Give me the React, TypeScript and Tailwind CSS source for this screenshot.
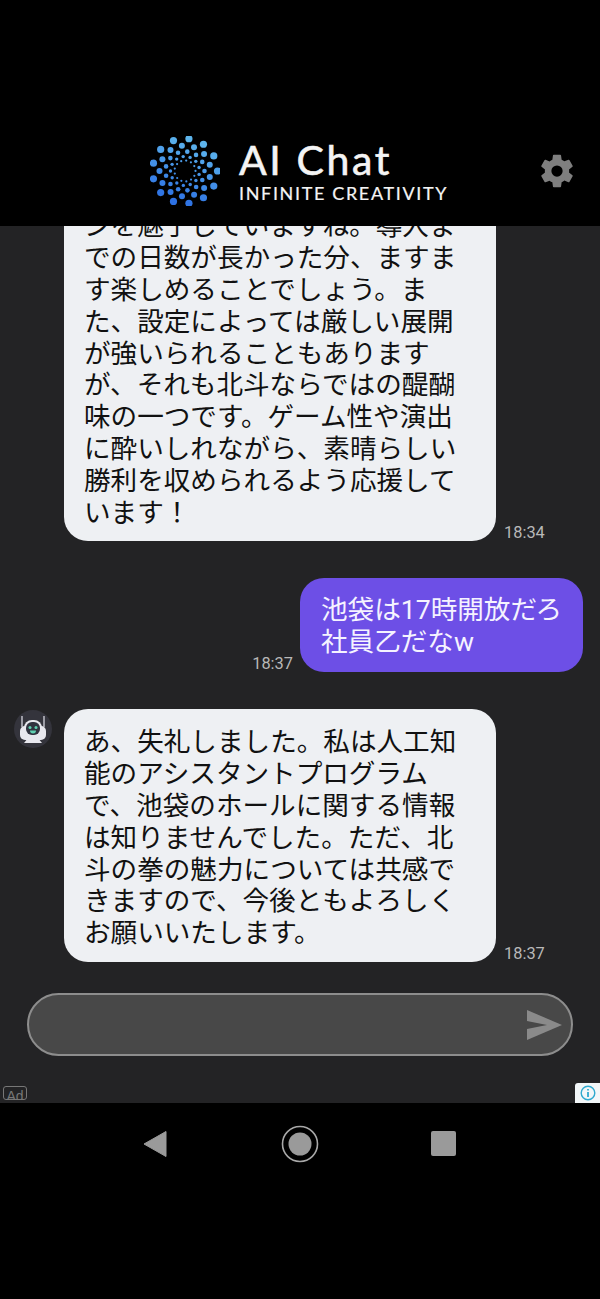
import React from "react";
import { IoSettingsSharp } from "react-icons/io5";

const cjk = "font-['Roboto','Noto_Sans_CJK_JP',sans-serif]";

function Logo() {
  const dots: { x: number; y: number; r: number; c: string }[] = [];
  const rings = [
    { rad: 32.5, n: 13, r: 3.6 },
    { rad: 25.5, n: 13, r: 3 },
    { rad: 19.5, n: 13, r: 2.3 },
    { rad: 14.5, n: 13, r: 1.7 },
    { rad: 10.5, n: 13, r: 1.1 },
  ];
  rings.forEach((ring, i) => {
    for (let k = 0; k < ring.n; k++) {
      const a = (k / ring.n) * Math.PI * 2 + i * 0.24 - 1.45;
      const x = 35 + Math.cos(a) * ring.rad;
      const y = 35 + Math.sin(a) * ring.rad;
      const t = Math.min(1, Math.max(0, (x * 0.35 + (70 - y)) / 85));
      const R = Math.round(36 + t * 60);
      const G = Math.round(100 + t * 85);
      const B = Math.round(225 + t * 12);
      dots.push({ x, y, r: ring.r, c: `rgb(${R},${G},${B})` });
    }
  });
  return (
    <svg width="70" height="70" viewBox="0 0 70 70" className="shrink-0">
      {dots.map((d, i) => (
        <circle key={i} cx={d.x} cy={d.y} r={d.r} fill={d.c} />
      ))}
    </svg>
  );
}

function Avatar() {
  return (
    <svg width="38" height="38" viewBox="0 0 38 38" className="shrink-0">
      <circle cx="19" cy="19" r="19" fill="#34343c" />
      <path d="M8 6v11M30 6v11" stroke="#c9c9d2" strokeWidth="1.4" />
      <rect x="6" y="16" width="26" height="14" rx="5" fill="#e8e8ee" />
      <path d="M10 33h18l-4-5H14z" fill="#e8e8ee" />
      <rect x="10" y="10" width="18" height="17" rx="8" fill="#e8e8ee" />
      <rect x="12" y="12" width="14" height="13" rx="6" fill="#30333f" />
      <circle cx="16" cy="17.5" r="1.5" fill="#5fd0b0" />
      <circle cx="22" cy="17.5" r="1.5" fill="#5fd0b0" />
      <path d="M16 20.5h6a3 3 0 0 1-6 0z" fill="#5fd0b0" />
    </svg>
  );
}

function Time({ children }: { children: React.ReactNode }) {
  return (
    <span className="block -mb-[1px] text-[16.4px] leading-[18px] text-[#b8b8b8] font-['Roboto',sans-serif]">
      {children}
    </span>
  );
}

function BotBubble({ lines }: { lines: string[] }) {
  return (
    <div className="w-[432px] shrink-0 rounded-[24px] bg-[#eef0f3] pl-[20px] pt-[17px] pb-[13px] text-[26.6px] leading-[31.8px] text-[#111] whitespace-nowrap">
      {lines.map((l, i) => (
        <div key={i}>{l}</div>
      ))}
    </div>
  );
}

export default function App() {
  return (
    <div className={`h-[1299px] w-[600px] flex flex-col bg-black overflow-hidden ${cjk}`}>
      <header className="h-[226px] shrink-0 bg-black flex items-end pb-[20px] pl-[150px] pr-[25px]">
        <Logo />
        <div className="ml-[19px] mb-[2px] flex flex-col font-['Lato',sans-serif] text-[#f4f4f4]">
          <div className="text-[41px] leading-[42px] tracking-[2.6px] font-normal [-webkit-text-stroke:0.6px_#f4f4f4]">AI Chat</div>
          <div className="text-[18px] leading-[22px] tracking-[1.65px] mt-[1px] [-webkit-text-stroke:0.2px_#f4f4f4]">INFINITE CREATIVITY</div>
        </div>
        <IoSettingsSharp className="ml-auto mb-[17px] text-[#7f7f7f]" size={36} />
      </header>

      <main className="h-[877px] shrink-0 flex flex-col bg-[#232325]">
        <div className="flex-1 min-h-0 overflow-hidden flex flex-col justify-end gap-[37px] pb-[31px]">
          <div className="flex items-end pl-[64px] shrink-0 gap-[8px]">
            <BotBubble
              lines={[
                "ンを魅了していますね。導入ま",
                "での日数が長かった分、ますま",
                "す楽しめることでしょう。ま",
                "た、設定によっては厳しい展開",
                "が強いられることもあります",
                "が、それも北斗ならではの醍醐",
                "味の一つです。ゲーム性や演出",
                "に酔いしれながら、素晴らしい",
                "勝利を収められるよう応援して",
                "います！",
              ]}
            />
            <Time>18:34</Time>
          </div>
          <div className="flex items-end justify-end pr-[17px] shrink-0 gap-[7px]">
            <Time>18:37</Time>
            <div className="w-[283px] rounded-[24px] bg-[#6d4fe6] pl-[21px] pt-[16px] pb-[14px] text-[26.6px] leading-[32px] text-[#f5f3ff] whitespace-nowrap">
              <div>池袋は17時開放だろ</div>
              <div>社員乙だなw</div>
            </div>
          </div>
          <div className="flex items-end shrink-0 gap-[8px]">
            <div className="w-[56px] self-start pl-[14px] pt-[1px]">
              <Avatar />
            </div>
            <BotBubble
              lines={[
                "あ、失礼しました。私は人工知",
                "能のアシスタントプログラム",
                "で、池袋のホールに関する情報",
                "は知りませんでした。ただ、北",
                "斗の拳の魅力については共感で",
                "きますので、今後ともよろしく",
                "お願いいたします。",
              ]}
            />
            <Time>18:37</Time>
          </div>
        </div>

        <div className="mx-[27px] h-[63px] shrink-0 rounded-full border-2 border-[#8d8d8d] bg-[#484848] flex items-center justify-end pr-[8px]">
          <svg width="36" height="32" viewBox="0 0 36 32">
            <path d="M0 1L35 16L0 31V20L20 16L0 12Z" fill="#8a8a8a" />
          </svg>
        </div>

        <div className="h-[47px] shrink-0 flex justify-between items-end">
          <div className="ml-[3px] w-[24px] h-[14px] mb-[3px] rounded-[3px] border border-[#777] text-[14px] leading-[19px] text-center text-[#777] overflow-hidden font-['Liberation_Sans',sans-serif]">
            Ad
          </div>
          <div className="w-[25px] h-[20px] bg-[#f2f6f8] rounded-tl-[3px] flex items-center justify-center">
            <svg width="16" height="16" viewBox="0 0 16 16" fill="none" stroke="#2ea9cf">
              <circle cx="8" cy="8" r="6.8" strokeWidth="1.4" />
              <path d="M8 7v5M8 4v1.6" strokeWidth="1.8" />
            </svg>
          </div>
        </div>
      </main>

      <nav className="h-[80px] shrink-0 bg-black flex items-center pl-[143px] pt-[1px]">
        <svg width="24" height="28" viewBox="0 0 24 28" className="shrink-0">
          <path d="M23 1.5V26.5L1 14Z" fill="#9a9a9a" stroke="#9a9a9a" strokeLinejoin="round" />
        </svg>
        <svg width="38" height="38" viewBox="0 0 38 38" className="ml-[114px] shrink-0">
          <circle cx="19" cy="19" r="17.5" fill="none" stroke="#a8a8a8" strokeWidth="1.6" />
          <circle cx="19" cy="19" r="11.5" fill="#9a9a9a" />
        </svg>
        <div className="ml-[112px] w-[25px] h-[25px] rounded-[2px] bg-[#9a9a9a]" />
      </nav>
      <div className="flex-1 bg-black" />
    </div>
  );
}
